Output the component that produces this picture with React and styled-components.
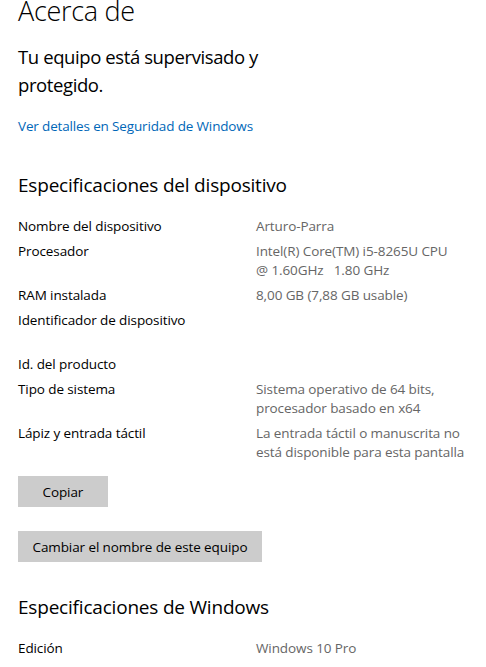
import React from 'react';
import styled, { createGlobalStyle } from 'styled-components';

const GlobalStyle = createGlobalStyle`
  html, body {
    margin: 0;
    padding: 0;
    background: #ffffff;
  }
  body {
    font-family: "Open Sans", "Noto Sans", sans-serif;
    color: #000;
    -webkit-font-smoothing: antialiased;
  }
`;

const Page = styled.div`
  width: 486px;
  height: 667px;
  overflow: hidden;
  padding: 0 18px;
  box-sizing: border-box;
`;

const Title = styled.h1`
  margin: -7px 0 0;
  font-size: 27px;
  font-weight: 300;
  line-height: 36px;
  letter-spacing: -0.3px;
`;

const Status = styled.p`
  margin: 14px 0 0;
  font-size: 18.5px;
  font-weight: 400;
  line-height: 28px;
  width: 280px;
  letter-spacing: -0.4px;
`;

const Link = styled.a`
  display: block;
  margin-top: 18px;
  font-size: 13.5px;
  line-height: 18px;
  color: #0067b8;
  text-decoration: none;
  letter-spacing: -0.15px;
`;

const Section = styled.h2`
  margin: ${p => p.$top || 37}px 0 ${p => p.$bottom || 19}px;
  font-size: 19px;
  font-weight: 400;
  line-height: 26px;
  letter-spacing: -0.2px;
`;

const Specs = styled.dl`
  display: grid;
  grid-template-columns: 238px 1fr;
  row-gap: 6px;
  margin: 0;
  font-size: 13.5px;
  line-height: 19px;
  letter-spacing: -0.1px;
`;

const Label = styled.dt`
  margin: 0;
  color: #000;
`;

const Value = styled.dd`
  margin: 0;
  color: #666666;
  white-space: pre;
  min-height: ${p => (p.$lines || 1) * 19}px;
`;

const Buttons = styled.div`
  display: flex;
  flex-direction: column;
  align-items: flex-start;
  gap: 24px;
  margin-top: 14px;
`;

const Button = styled.button`
  border: none;
  background: #cccccc;
  height: 31px;
  padding: 0 ${p => p.$wide ? 14.5 : 24.5}px;
  font-family: inherit;
  font-size: 13.5px;
  letter-spacing: -0.1px;
  color: #000;
  cursor: pointer;
`;

const device = [
  ['Nombre del dispositivo', 'Arturo-Parra'],
  ['Procesador', 'Intel(R) Core(TM) i5-8265U CPU\n@ 1.60GHz   1.80 GHz', 2],
  ['RAM instalada', '8,00 GB (7,88 GB usable)'],
  ['Identificador de dispositivo', '', 2],
  ['Id. del producto', ''],
  ['Tipo de sistema', 'Sistema operativo de 64 bits,\nprocesador basado en x64', 2],
  ['Lápiz y entrada táctil', 'La entrada táctil o manuscrita no\nestá disponible para esta pantalla', 2],
];

const SpecList = ({ rows }) => (
  <Specs>
    {rows.map(([label, value, lines]) => (
      <React.Fragment key={label}>
        <Label>{label}</Label>
        <Value $lines={lines}>{value}</Value>
      </React.Fragment>
    ))}
  </Specs>
);

const App = () => (
  <Page>
    <GlobalStyle />
    <Title>Acerca de</Title>
    <Status>Tu equipo está supervisado y protegido.</Status>
    <Link href="#">Ver detalles en Seguridad de Windows</Link>
    <Section>Especificaciones del dispositivo</Section>
    <SpecList rows={device} />
    <Buttons>
      <Button>Copiar</Button>
      <Button $wide>Cambiar el nombre de este equipo</Button>
    </Buttons>
    <Section $top={32}>Especificaciones de Windows</Section>
    <SpecList rows={[['Edición', 'Windows 10 Pro']]} />
  </Page>
);

export default App;
